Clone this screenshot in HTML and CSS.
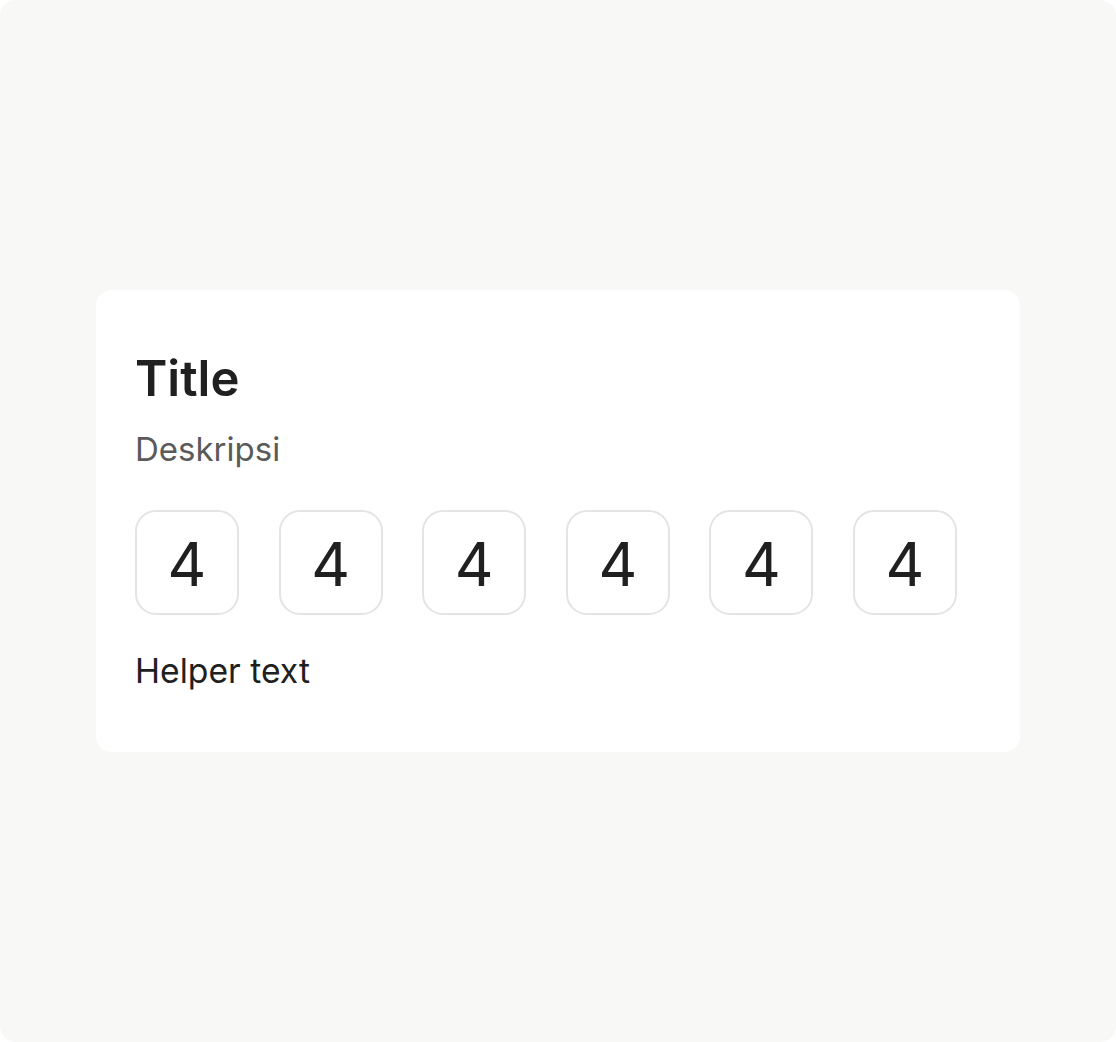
FILE: index.html
```html
<!DOCTYPE html>
<html lang="id">
<head>
<meta charset="utf-8">
<title>OTP</title>
<link rel="stylesheet" href="styles.css">
</head>
<body>
<div class="frame">
  <div class="card">
    <h1 class="title">Title</h1>
    <p class="desc">Deskripsi</p>
    <div class="otp">
      <div class="cell">4</div>
      <div class="cell">4</div>
      <div class="cell">4</div>
      <div class="cell">4</div>
      <div class="cell">4</div>
      <div class="cell">4</div>
    </div>
    <p class="helper">Helper text</p>
  </div>
</div>
</body>
</html>
```
FILE: styles.css
```css
html, body {
  margin: 0;
  padding: 0;
  background: #ffffff;
}
body {
  font-family: Inter, "Noto Sans", sans-serif;
}
.frame {
  width: 1116px;
  height: 1042px;
  box-sizing: border-box;
  background: #f8f8f6;
  border-radius: 16px;
  display: flex;
  align-items: center;
  justify-content: center;
}
.card {
  width: 924px;
  height: 462px;
  box-sizing: border-box;
  background: #ffffff;
  border-radius: 16px;
  padding: 60px 39px 0 39px;
  display: flex;
  flex-direction: column;
}
.title {
  margin: 0;
  font-size: 49px;
  line-height: 58px;
  font-weight: 600;
  color: #202020;
}
.desc {
  margin: 16px 0 0 0;
  font-size: 33px;
  line-height: 50px;
  font-weight: 400;
  color: #5a5a5a;
}
.otp {
  margin-top: 36px;
  display: flex;
  gap: 39.6px;
}
.cell {
  width: 104px;
  height: 105px;
  box-sizing: border-box;
  border: 2px solid #e4e4e4;
  border-radius: 21px;
  display: flex;
  align-items: center;
  justify-content: center;
  font-size: 60px;
  font-weight: 400;
  color: #202020;
  line-height: 1;
  padding-top: 2px;
}
.helper {
  margin: 31px 0 0 0;
  font-size: 33.7px;
  line-height: 50px;
  font-weight: 400;
  color: #202020;
}
```
